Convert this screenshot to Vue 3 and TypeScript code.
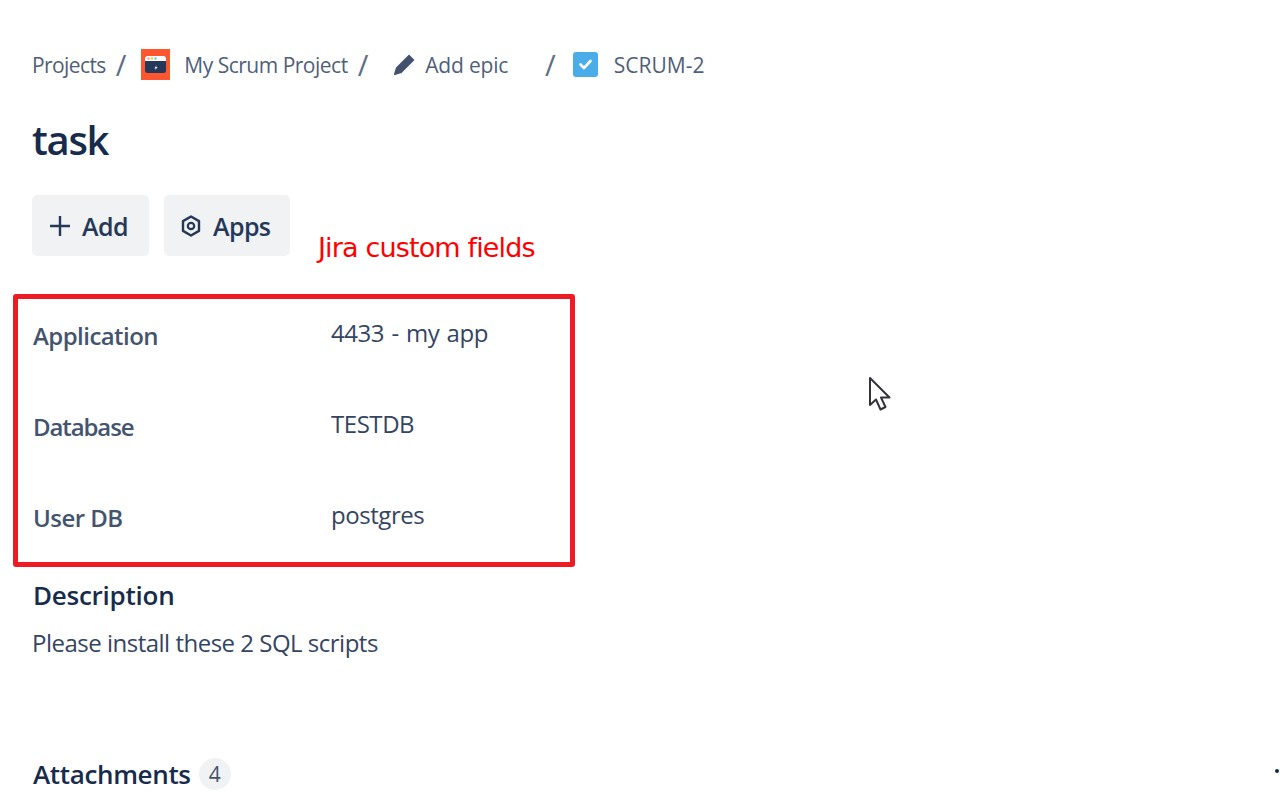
<script setup lang="ts">
const fields: { label: string; value: string; tight?: boolean }[] = [
  { label: 'Application', value: '4433 - my app' },
  { label: 'Database', value: 'TESTDB', tight: true },
  { label: 'User DB', value: 'postgres' },
]
</script>

<template>
  <div class="page">
    <nav class="crumbs">
      <span class="crumb projects">Projects</span>
      <span class="sep s1">/</span>
      <svg class="proj" width="29" height="31" viewBox="0 0 29 31">
        <rect width="29" height="31" fill="#ff5630" />
        <rect x="4" y="7" width="21" height="17" rx="2.5" fill="#253858" />
        <path d="M4 12V9.500A2.500 2.500 0 0 1 6.500 7h16A2.500 2.500 0 0 1 25 9.500V12z" fill="#fff" />
        <rect x="6.500" y="8.500" width="2" height="2" fill="#ff8f73" />
        <rect x="10" y="8.500" width="2" height="2" fill="#ffc400" />
        <rect x="13.500" y="8.500" width="2" height="2" fill="#4bc0e0" />
        <path d="M15.500 16l-2 3.500h1.500l-1 2 2.500-3.500h-1.500z" fill="#fff" />
      </svg>
      <span class="crumb name">My Scrum Project</span>
      <span class="sep s2">/</span>
      <svg class="pen" width="22" height="22" viewBox="0 0 22 22">
        <path d="M16 .5l5.500 5.500L8.500 19 2 21a.8.8 0 0 1-1-1l2-6.500z" fill="#42526e" />
      </svg>
      <span class="crumb epic">Add epic</span>
      <span class="sep s3">/</span>
      <svg class="check" width="25" height="25" viewBox="0 0 25 25">
        <rect width="25" height="25" rx="3" fill="#4bade8" />
        <path d="M7.500 12.500l3.500 3.500 6.500-7" fill="none" stroke="#fff" stroke-width="2.600" stroke-linecap="round" stroke-linejoin="round" />
      </svg>
      <span class="crumb key">SCRUM-2</span>
    </nav>

    <h1 class="title">task</h1>

    <div class="actions">
      <button class="btn add" type="button">
        <svg width="22" height="22" viewBox="0 0 22 22">
          <path d="M11 1v20M1 11h20" stroke="#253858" stroke-width="2.400" fill="none" />
        </svg>
        <span>Add</span>
      </button>
      <button class="btn apps" type="button">
        <svg width="20" height="24" viewBox="0 0 20 24">
          <path d="M10 2.500l8 4.600v9.800l-8 4.600-8-4.600V7.100z" fill="none" stroke="#253858" stroke-width="2.400" stroke-linejoin="round" />
          <circle cx="10" cy="12" r="3.200" fill="none" stroke="#253858" stroke-width="2.200" />
        </svg>
        <span>Apps</span>
      </button>
    </div>

    <div class="fields">
      <div v-for="f in fields" :key="f.label" class="field">
        <span class="label" :class="{ tight: f.tight }">{{ f.label }}</span>
        <span class="value">{{ f.value }}</span>
      </div>
    </div>

    <h2 class="heading desc">Description</h2>
    <p class="body">Please install these 2 SQL scripts</p>

    <div class="attach">
      <h2 class="heading att">Attachments</h2>
      <span class="badge">4</span>
    </div>

    <div class="annot-label">Jira custom fields</div>
    <div class="annot-box"></div>
    <svg class="cursor" width="24" height="38" viewBox="0 0 24 38">
      <path d="M2 2v27l6-5.500 4.500 10 5-2.500-4.500-9.500h8.500z" fill="#fff" stroke="#33333a" stroke-width="2" stroke-linejoin="round" />
    </svg>
    <div class="dot"></div>
  </div>
</template>

<style>
html,
body {
  margin: 0;
  background: #fff;
}
</style>

<style scoped>
.page {
  position: relative;
  width: 1280px;
  height: 800px;
  overflow: hidden;
  box-sizing: border-box;
  padding: 49px 0 0 32px;
  background: #fff;
  font-family: "Open Sans", "Noto Sans", sans-serif;
  color: #172b4d;
}
.crumbs {
  display: flex;
  align-items: center;
  height: 31px;
  font-size: 21px;
  color: #505f79;
  white-space: nowrap;
}
.crumb {
  letter-spacing: -0.5px;
}
.projects { letter-spacing: -0.6px; }
.epic { letter-spacing: -0.2px; }
.key { letter-spacing: 0; }
.sep {
  font-size: 29px;
  color: #5e6c84;
}
.s1 { margin-left: 10px; }
.proj { margin-left: 15px; }
.name { margin-left: 14px; }
.s2 { margin-left: 10px; }
.pen { margin-left: 25px; }
.epic { margin-left: 10px; }
.s3 { margin-left: 37px; }
.check { margin-left: 17px; }
.key { margin-left: 16px; }

.title {
  margin: 35px 0 0;
  font-size: 40px;
  line-height: 50px;
  font-weight: 600;
  letter-spacing: -1.3px;
}
.actions {
  display: flex;
  gap: 15px;
  margin-top: 30px;
}
.btn {
  display: flex;
  align-items: center;
  height: 61px;
  border: 0;
  border-radius: 5px;
  background: #f1f2f4;
  font-family: inherit;
  font-size: 25px;
  font-weight: 600;
  letter-spacing: -0.6px;
  color: #253858;
}
.add {
  width: 117px;
  padding: 0 0 0 17px;
  gap: 11px;
}
.apps {
  width: 126px;
  padding: 0 0 0 17px;
  gap: 12px;
}
.fields {
  margin-top: 35px;
  margin-left: 1px;
}
.field {
  display: grid;
  grid-template-columns: 298px 1fr;
  height: 91px;
  box-sizing: border-box;
  padding-top: 29px;
}
.label {
  font-size: 24px;
  line-height: 32px;
  font-weight: 600;
  letter-spacing: -0.55px;
  color: #44546f;
}
.tight {
  letter-spacing: -1.1px;
}
.value {
  margin-top: -3px;
  font-size: 24px;
  line-height: 32px;
  letter-spacing: -0.45px;
  word-spacing: 1.5px;
  color: #344563;
}
.heading {
  margin: 0;
  font-size: 26px;
  line-height: 34px;
  font-weight: 600;
  letter-spacing: -0.25px;
  color: #172b4d;
}
.att {
  letter-spacing: -0.35px;
}
.desc {
  margin-top: 14px;
  margin-left: 1px;
}
.body {
  margin: 15px 0 0;
  font-size: 24px;
  line-height: 32px;
  letter-spacing: -0.5px;
  color: #344563;
}
.attach {
  display: flex;
  align-items: center;
  gap: 8px;
  margin-top: 98px;
  margin-left: 1px;
}
.badge {
  display: flex;
  align-items: center;
  justify-content: center;
  width: 32px;
  height: 32px;
  border-radius: 50%;
  background: #f1f2f4;
  font-size: 21px;
  color: #44546f;
}
.annot-label {
  position: absolute;
  left: 318px;
  top: 230px;
  font-family: "DejaVu Sans", sans-serif;
  font-size: 27px;
  line-height: 36px;
  letter-spacing: -0.85px;
  color: #ff0000;
}
.annot-box {
  position: absolute;
  left: 13px;
  top: 294px;
  width: 562px;
  height: 273px;
  box-sizing: border-box;
  border: 5px solid #ed1c24;
  border-radius: 3px;
}
.cursor {
  position: absolute;
  left: 868px;
  top: 376px;
}
.dot {
  position: absolute;
  left: 1275px;
  top: 769px;
  width: 4px;
  height: 4px;
  border-radius: 50%;
  background: #172b4d;
}
</style>
